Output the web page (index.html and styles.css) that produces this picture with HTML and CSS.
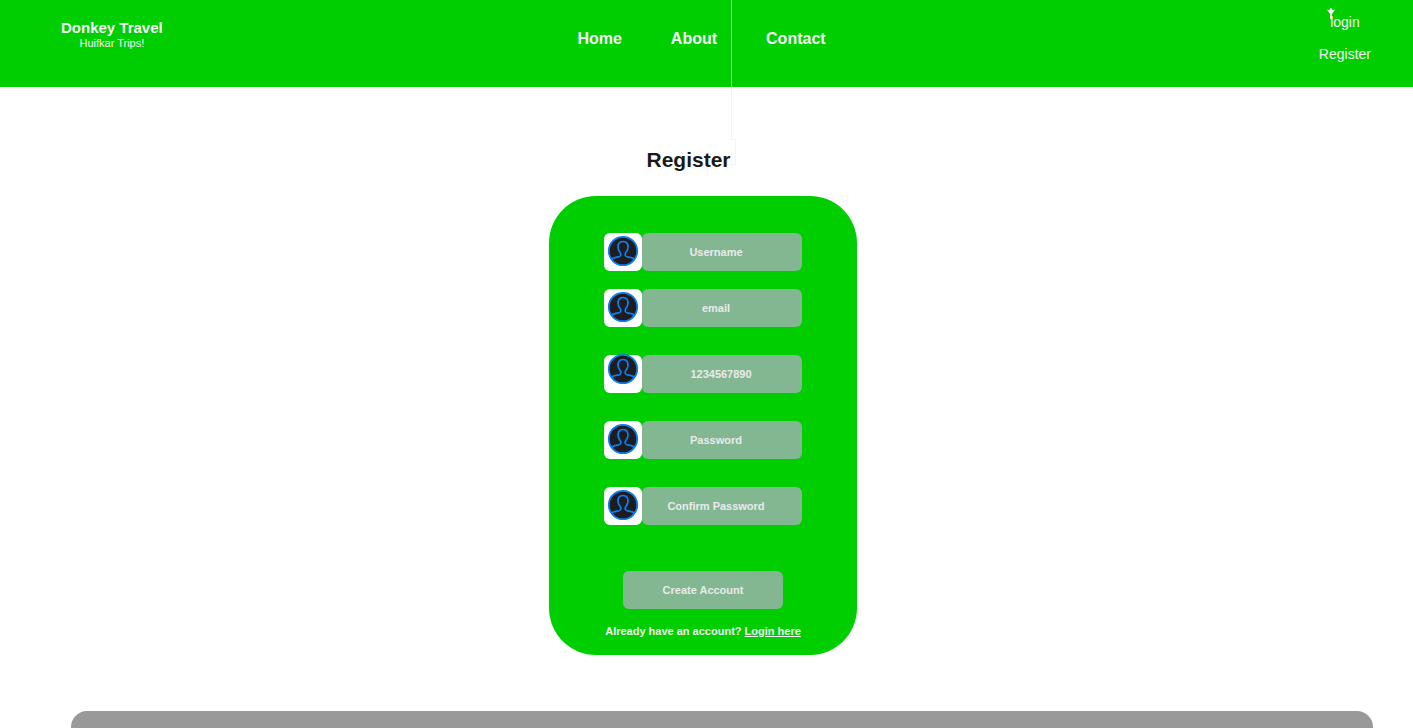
FILE: index.html
```html
<!DOCTYPE html>
<html lang="en">
<head>
<meta charset="utf-8">
<title>Donkey Travel - Register</title>
<link rel="stylesheet" href="styles.css">
</head>
<body>
<svg width="0" height="0" class="sprite" aria-hidden="true">
  <symbol id="user" viewBox="0 0 32 32">
    <circle cx="16" cy="16" r="14.200" fill="#1d1d1f" stroke="#0a80f5" stroke-width="1.800"/>
    <path d="M4.500 24.500C6 22.500 9 22.400 11.800 21.800C13.800 21.300 14.200 20 13.600 18.300C13.200 17.200 11.800 16 11.300 14C10.300 9.500 12 6.500 16 6.500S21.700 9.500 20.700 14C20.200 16 18.800 17.200 18.400 18.300C17.800 20 18.200 21.300 20.200 21.800C23 22.400 26 22.500 27.500 24.500" fill="none" stroke="#0a80f5" stroke-width="1.700"/>
  </symbol>
</svg>
<header class="header">
  <div class="brand">
    <strong class="brand-name">Donkey Travel</strong>
    <span class="brand-tag">Huifkar Trips!</span>
  </div>
  <nav class="nav">
    <a href="#">Home</a>
    <a href="#">About</a>
    <a href="#">Contact</a>
  </nav>
  <div class="account">
    <a class="login" href="#">login
      <svg class="sprout" viewBox="0 0 8 11" width="8" height="11" aria-hidden="true"><path d="M0 1.500l2.500.5L3.500 0h1L5.500 2 8 1.500 5 6v5H3V6z" fill="#f0f0f0"/></svg>
    </a>
    <a href="#">Register</a>
  </div>
</header>
<div class="guide" aria-hidden="true"></div>
<div class="guide-end" aria-hidden="true"></div>
<main class="main">
  <h1 class="title">Register</h1>
  <form class="card">
    <div class="field">
      <label class="icon" for="username" aria-label="Username"><svg><use href="#user"/></svg></label>
      <input id="username" type="text" placeholder="Username">
    </div>
    <div class="field">
      <label class="icon" for="email" aria-label="Email"><svg><use href="#user"/></svg></label>
      <input id="email" type="email" placeholder="email">
    </div>
    <div class="field spaced phone">
      <label class="icon" for="phone" aria-label="Phone"><svg><use href="#user"/></svg></label>
      <input id="phone" type="tel" placeholder="1234567890">
    </div>
    <div class="field spaced">
      <label class="icon" for="password" aria-label="Password"><svg><use href="#user"/></svg></label>
      <input id="password" type="password" placeholder="Password">
    </div>
    <div class="field spaced">
      <label class="icon" for="confirm" aria-label="Confirm Password"><svg><use href="#user"/></svg></label>
      <input id="confirm" type="password" placeholder="Confirm Password">
    </div>
    <button class="submit" type="submit">Create Account</button>
    <p class="hint">Already have an account? <a href="#">Login here</a></p>
  </form>
</main>
<footer class="footer"></footer>
</body>
</html>
```
FILE: styles.css
```css
* {
  box-sizing: border-box;
}

body {
  display: flex;
  flex-direction: column;
  min-height: 100vh;
  margin: 0;
  background: #fff;
  font-family: "Liberation Sans", Arial, sans-serif;
}

.sprite {
  position: absolute;
}

.header {
  display: grid;
  grid-template-columns: 1fr auto 1fr;
  align-items: start;
  min-height: 87px;
  padding: 0 42px 0 32px;
  background: #00ce00;
  color: #f4f4f4;
}

.header a {
  color: inherit;
  text-decoration: none;
}

.brand {
  display: flex;
  flex-direction: column;
  align-items: center;
  justify-self: start;
  margin-left: 29px;
  padding-top: 19px;
}

.brand-name {
  font-size: 15px;
  line-height: 18px;
}

.brand-tag {
  font-size: 11px;
  line-height: 13px;
}

.nav {
  display: flex;
  gap: 49px;
  padding-top: 30px;
  font-size: 16px;
  font-weight: bold;
  line-height: 18px;
}

.account {
  display: flex;
  flex-direction: column;
  align-items: center;
  gap: 16px;
  justify-self: end;
  padding-top: 14px;
  font-size: 14px;
  line-height: 16px;
}

.login {
  position: relative;
}

.sprout {
  position: absolute;
  left: -3px;
  top: -6px;
}

.guide,
.guide-end {
  position: absolute;
  border: 0 solid rgba(240, 240, 240, 0.7);
}

.guide {
  left: 731px;
  top: 0;
  height: 139px;
  border-left-width: 1px;
}

.guide-end {
  left: 731px;
  top: 139px;
  width: 5px;
  height: 26px;
  border-width: 1px 1px 1px 0;
}

.main {
  display: flex;
  flex-direction: column;
  align-items: center;
  padding: 61px 7px 56px 0;
}

.title {
  margin: 0 29px 24px 0;
  color: #1a1a1a;
  font-size: 21px;
  line-height: 24px;
}

.card {
  display: flex;
  flex-direction: column;
  align-items: center;
  width: 308px;
  padding: 37px 0 17px;
  border-radius: 47px;
  background: #00ce00;
  color: #f0f0f0;
  font-size: 11px;
  font-weight: bold;
}

.field {
  display: flex;
  margin-bottom: 18px;
}

.spaced {
  margin-top: 10px;
}

.icon {
  display: flex;
  justify-content: center;
  width: 38px;
  height: 38px;
  padding-top: 2px;
  border-radius: 6px;
  background: #fff;
}

.icon svg {
  width: 32px;
  height: 32px;
}

.phone .icon svg {
  margin-top: -4px;
}

.field input,
.submit {
  width: 160px;
  height: 38px;
  border: 0;
  border-radius: 6px;
  background: #82b792;
  color: inherit;
  font: inherit;
  text-align: center;
}

.field input {
  padding: 0 12px 0 0;
}

.phone input {
  padding-right: 2px;
}

.field input::placeholder {
  color: #eaeaea;
  opacity: 1;
}

.submit {
  margin-top: 28px;
  padding: 0;
  color: #eaeaea;
}

.hint {
  margin: 16px 0 0;
  line-height: 13px;
}

.hint a {
  color: inherit;
}

.footer {
  flex: 1;
  min-height: 16px;
  margin: 0 40px 0 71px;
  border-radius: 16px 16px 0 0;
  background: #999;
}
```
